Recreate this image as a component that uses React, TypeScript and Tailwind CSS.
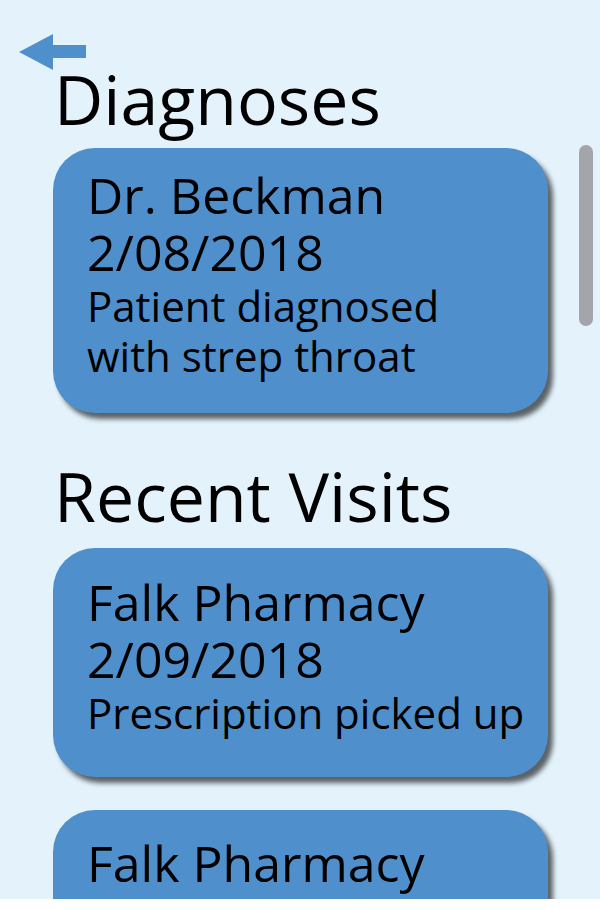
export default function App() {
  const font = { fontFamily: '"Open Sans", "Noto Sans", sans-serif' }
  return (
    <div className="w-[600px] h-[909px] bg-white" style={font}>
      <div className="relative h-[899px] overflow-hidden bg-[#e3f2fb] text-black">
        {/* back arrow */}
        <div className="pt-[34px] pl-[19px]">
          <svg width="67" height="36" viewBox="0 0 67 36">
            <polygon points="0,18 34,0 34,36" fill="#4f8fcc" />
            <rect x="33" y="11" width="34" height="13" fill="#4f8fcc" />
          </svg>
        </div>

        {/* scrollbar */}
        <div className="absolute left-[579px] top-[145px] w-[14px] h-[181px] rounded-full bg-[#a4a5aa]" />

        <div className="pl-[53px] pr-[52px]">
          <h1 className="text-[68px] leading-[68px] pl-[1px] -mt-[5px] mb-[15px]">Diagnoses</h1>

          <div className="h-[265px] rounded-[42px] bg-[#4f8fcc] pl-[34px] pt-[19px] shadow-[5px_6px_5px_rgba(0,0,0,0.6)]">
            <div className="text-[50px] leading-[57px]">Dr. Beckman</div>
            <div className="text-[50px] leading-[57px]">2/08/2018</div>
            <div className="text-[42px] leading-[50px]">Patient diagnosed</div>
            <div className="text-[42px] leading-[50px]">with strep throat</div>
          </div>

          <h2 className="text-[68px] leading-[68px] pl-[1px] mt-[49px] mb-[18px]">Recent Visits</h2>

          <div className="h-[229px] rounded-[42px] bg-[#4f8fcc] pl-[34px] pt-[26px] shadow-[5px_6px_5px_rgba(0,0,0,0.6)]">
            <div className="text-[50px] leading-[57px]">Falk Pharmacy</div>
            <div className="text-[50px] leading-[57px]">2/09/2018</div>
            <div className="text-[42px] leading-[50px]">Prescription picked up</div>
          </div>

          <div className="mt-[33px] h-[229px] rounded-[42px] bg-[#4f8fcc] pl-[34px] pt-[25px] shadow-[5px_6px_5px_rgba(0,0,0,0.6)]">
            <div className="text-[50px] leading-[57px]">Falk Pharmacy</div>
            <div className="text-[50px] leading-[57px]">2/09/2018</div>
            <div className="text-[42px] leading-[50px]">Prescription picked up</div>
          </div>
        </div>
      </div>
    </div>
  )
}
